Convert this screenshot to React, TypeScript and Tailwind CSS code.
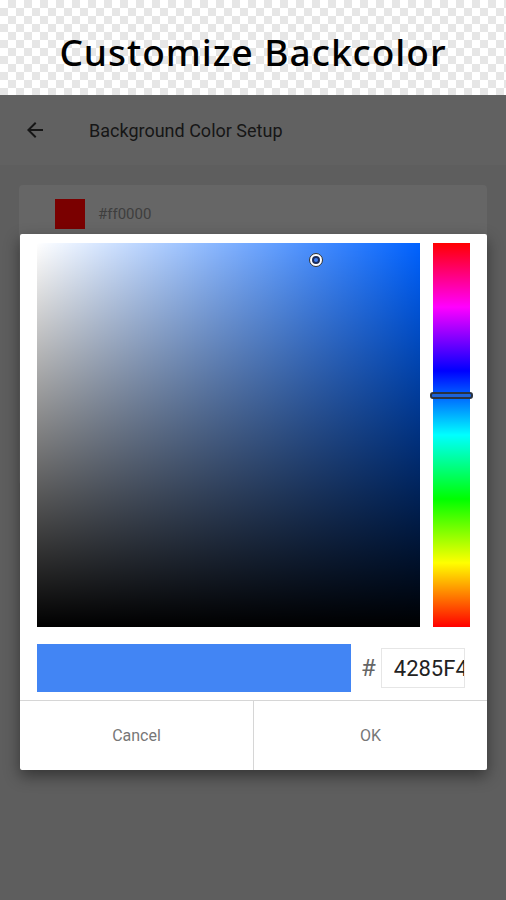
import React from "react";

export default function App() {
  return (
    <div className="w-[506px] h-[900px] flex flex-col overflow-hidden bg-[#5e5e5e]">
      <Banner />

      <div className="relative flex-1 flex flex-col">
        <div className="h-[70px] flex items-center bg-[#616161] pl-[23px]">
          <svg width="24" height="24" viewBox="0 0 24 24" className="fill-[#161616]">
            <path d="M20 11H7.83l5.59-5.59L12 4l-8 8 8 8 1.41-1.41L7.83 13H20v-2z" />
          </svg>
          <span className="ml-[42px] text-[18px] text-[#161616] font-['Roboto',sans-serif]">
            Background Color Setup
          </span>
        </div>

        <div className="px-[19px] pt-[20px]">
          <div className="h-[300px] rounded-[4px] bg-[#666666] pl-[36px] pt-[14px]">
            <div className="flex items-center gap-[13px]">
              <div className="w-[30px] h-[30px] bg-[#7a0000]" />
              <span className="text-[15px] text-[#3e3e3e] font-['Roboto',sans-serif]">#ff0000</span>
            </div>
          </div>
        </div>

        <ColorDialog />
      </div>
    </div>
  );
}

function Banner() {
  return (
    <div className="h-[95px] flex items-center justify-center bg-white bg-[conic-gradient(#e6e6e6_25%,#ffffff_0_50%,#e6e6e6_0_75%,#ffffff_0)] bg-[length:16px_16px]">
      <h1 className="text-[37px] font-medium tracking-[1px] text-black font-['Noto_Sans',sans-serif] leading-none pt-[8px]">
        Customize Backcolor
      </h1>
    </div>
  );
}

function ColorDialog() {
  return (
    <div className="absolute left-[20px] top-[139px] w-[467px] bg-white rounded-[2px] shadow-[0_6px_16px_rgba(0,0,0,0.45)] font-['Roboto',sans-serif]">
      <div className="flex gap-[13px] px-[17px] pt-[9px]">
        <div className="relative w-[383px] h-[384px] bg-[#0062ff]">
          <div className="absolute inset-0 bg-[linear-gradient(to_right,#ffffff,rgba(255,255,255,0))]" />
          <div className="absolute inset-0 bg-[linear-gradient(to_bottom,rgba(0,0,0,0),#000000)]" />
          <div className="absolute left-[272px] top-[10px] w-[14px] h-[14px] rounded-full bg-white border border-[#333] flex items-center justify-center">
            <div className="w-[8px] h-[8px] rounded-full border-2 border-[#1b2c5c] bg-[#3f7ef0]" />
          </div>
        </div>
        <div className="relative w-[37px] h-[384px] bg-[linear-gradient(to_bottom,#ff0000,#ff00ff_16.7%,#0000ff_33.3%,#00ffff_50%,#00ff00_66.7%,#ffff00_83.3%,#ff0000)]">
          <div className="absolute left-[-3px] right-[-3px] top-[149px] h-[7px] rounded-[3px] border-2 border-[#2a3340] bg-[#1d63d8]" />
        </div>
      </div>

      <div className="flex items-center px-[17px] pt-[17px] pb-[8px]">
        <div className="w-[314px] h-[48px] bg-[#4285F4]" />
        <span className="ml-[10px] text-[24px] text-[#666] leading-none">#</span>
        <div className="ml-[5px] w-[84px] h-[40px] border border-[#e6e6e6] flex items-center pl-[12px] overflow-hidden">
          <span className="text-[22px] text-[#222] whitespace-nowrap">4285F4</span>
        </div>
      </div>

      <div className="flex h-[70px] border-t border-[#d6d6d6]">
        <button className="flex-1 flex items-center justify-center text-[16px] text-[#777] border-r border-[#d6d6d6]">
          Cancel
        </button>
        <button className="flex-1 flex items-center justify-center text-[16px] text-[#777]">OK</button>
      </div>
    </div>
  );
}
